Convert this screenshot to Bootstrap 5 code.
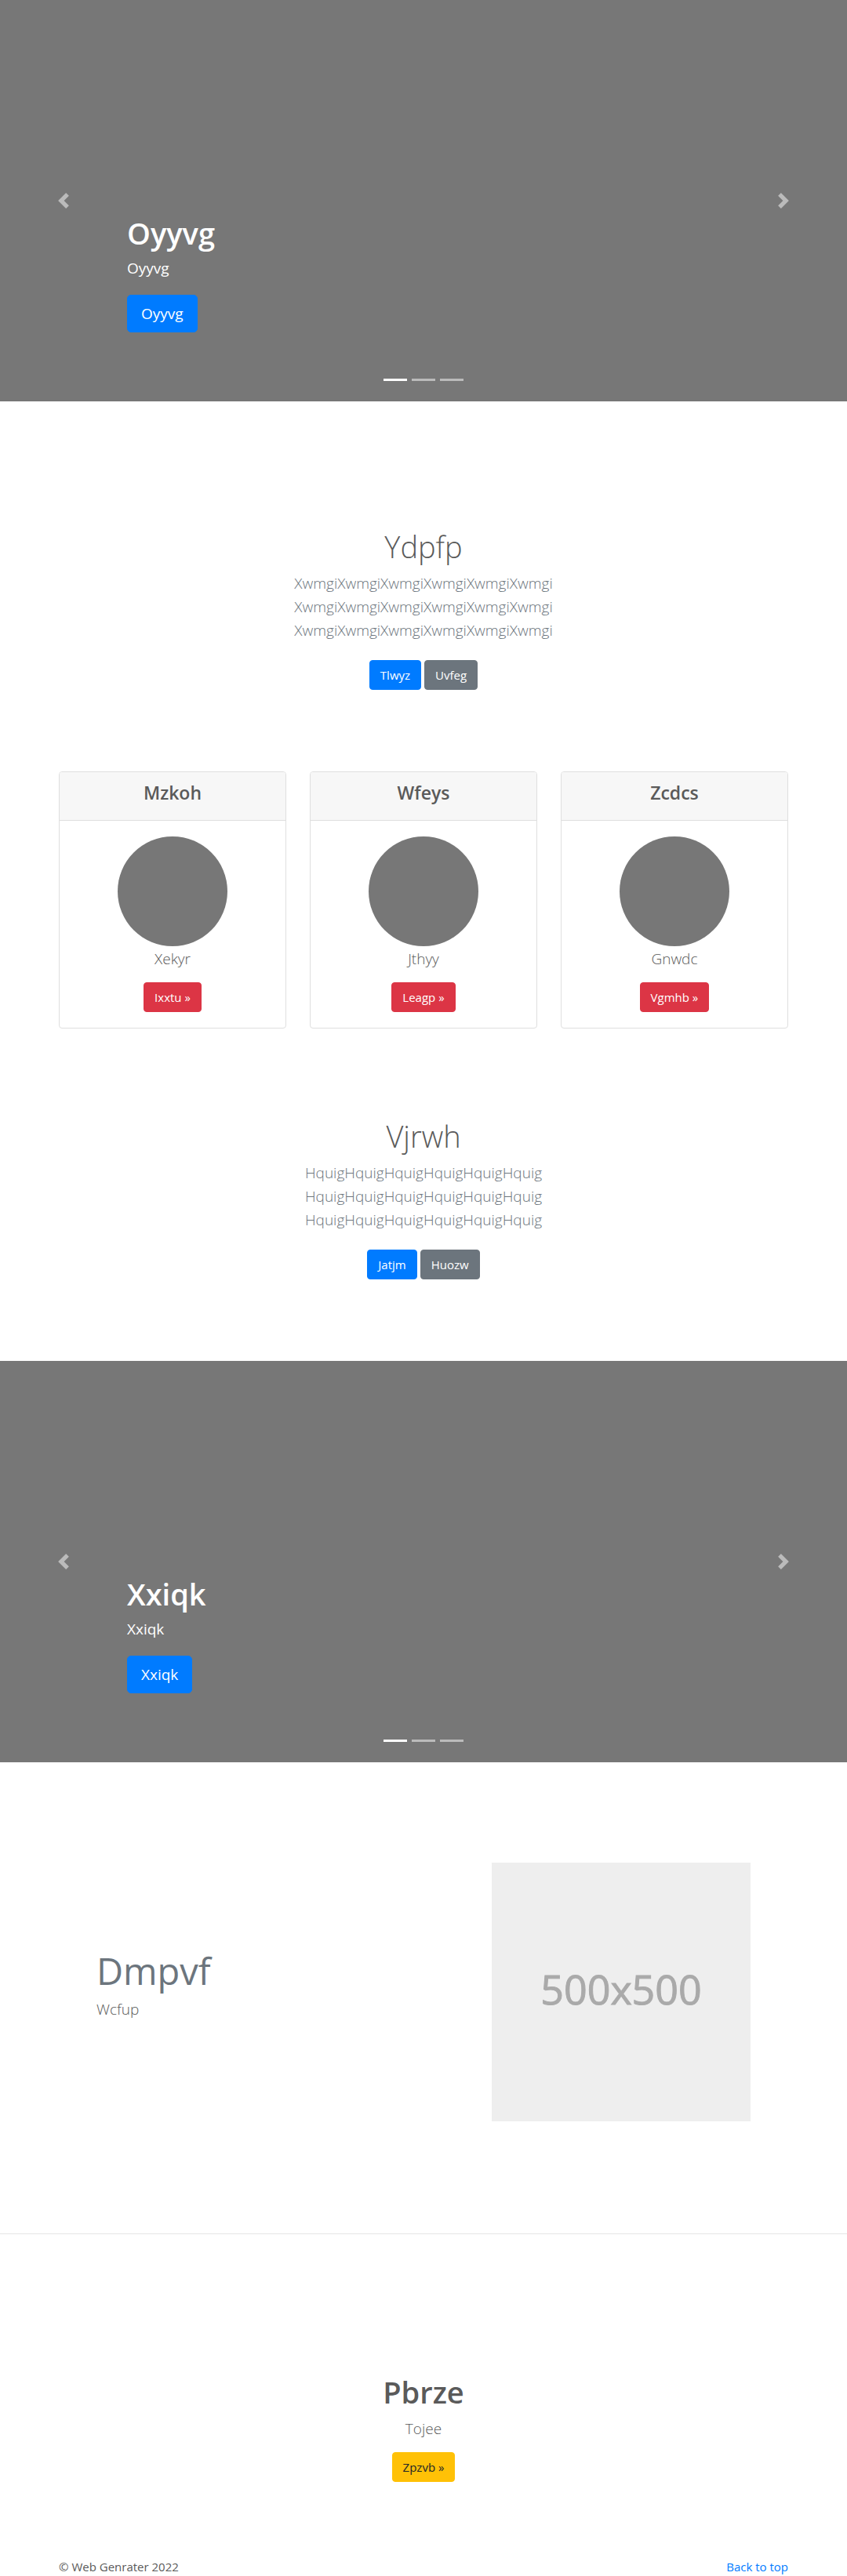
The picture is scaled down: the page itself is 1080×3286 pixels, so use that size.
<!DOCTYPE html>
<html lang="en">
<head>
<meta charset="utf-8">
<meta name="viewport" content="width=device-width, initial-scale=1">
<title>Web Genrater</title>
<link href="https://cdn.jsdelivr.net/npm/bootstrap@5.3.0/dist/css/bootstrap.min.css" rel="stylesheet">
<style>
body { font-family: "Segoe UI", "Open Sans", "Noto Sans", sans-serif; color: #5a5a5a; }
.container, .row { --bs-gutter-x: 30px; }
h1, h2, h4 { font-weight: 600; color: inherit; }
h1 { font-size: 38px; line-height: 48px; padding-top: 1px; margin-bottom: 7px; }
h4 { font-size: 23px; line-height: 29px; }
.lead { font-size: 19px; line-height: 30px; font-weight: 300; padding-top: 1px; margin-bottom: 15px; }
.btn { --bs-btn-font-size: 15px; --bs-btn-padding-x: 13px; --bs-btn-border-radius: 4px; line-height: 24px; }
.btn-lg { --bs-btn-font-size: 19px; --bs-btn-padding-x: 17px; --bs-btn-border-radius: 5px; line-height: 30px; }
.btn-primary { --bs-btn-bg: #007bff; --bs-btn-border-color: #007bff; }
.btn-warning { --bs-btn-color: #212529; --bs-btn-hover-color: #212529; }
.muted-text { color: #6c757d; }
.hero .carousel-item { height: 512px; background: #777; }
.hero .carousel-caption { bottom: 48px; padding-bottom: 20px; }
.hero .carousel-caption p { font-size: 19px; line-height: 28px; margin-bottom: 20px; }
.hero .carousel-control-prev, .hero .carousel-control-next { opacity: .5; }
.chevron { width: 20px; height: 20px; fill: #fff; }
.intro { padding: 96px 0; }
.after-hero { margin-top: 64px; }
.after-cards { margin-top: 16px; }
.card { --bs-card-border-color: #dfdfdf; --bs-card-border-radius: 4px; --bs-card-inner-border-radius: 3px; --bs-card-cap-bg: #f7f7f7; }
.card-header { padding: 12px 20px; }
.card-body { padding: 20px; }
.avatar { width: 140px; height: 140px; background: #777; }
.feature { padding: 128px 48px 143px; }
.feature h2 { font-size: 47px; line-height: 50px; font-weight: 400; }
.feature svg { display: block; width: 100%; }
.rule { border-top: 1px solid #e5e5e5; }
.closing { padding: 176px 0 96px; }
.footer-line { font-size: 15px; line-height: 24px; }
.footer-line a { color: #007bff; text-decoration: none; }
</style>
</head>
<body>
<main>
  <div id="heroOne" class="carousel slide hero">
    <div class="carousel-indicators">
      <button type="button" data-bs-target="#heroOne" data-bs-slide-to="0" class="active" aria-current="true" aria-label="Slide 1"></button>
      <button type="button" data-bs-target="#heroOne" data-bs-slide-to="1" aria-label="Slide 2"></button>
      <button type="button" data-bs-target="#heroOne" data-bs-slide-to="2" aria-label="Slide 3"></button>
    </div>
    <div class="carousel-inner">
      <div class="carousel-item active"><div class="carousel-caption text-start">
        <h1>Oyyvg</h1><p>Oyyvg</p><p><a class="btn btn-lg btn-primary d-inline-block align-top" href="#">Oyyvg</a></p>
      </div></div>
      <div class="carousel-item"></div>
      <div class="carousel-item"></div>
    </div>
    <button class="carousel-control-prev" type="button" data-bs-target="#heroOne" data-bs-slide="prev" aria-label="Previous"><svg class="chevron" viewBox="0 0 8 8"><path d="M5.25 0l-4 4 4 4 1.5-1.5-2.5-2.5 2.5-2.5-1.5-1.5z"/></svg></button>
    <button class="carousel-control-next" type="button" data-bs-target="#heroOne" data-bs-slide="next" aria-label="Next"><svg class="chevron" viewBox="0 0 8 8"><path d="M2.75 0l-1.5 1.5 2.5 2.5-2.5 2.5 1.5 1.5 4-4-4-4z"/></svg></button>
  </div>

  <section class="intro after-hero text-center container">
    <h1 class="fw-light">Ydpfp</h1>
    <p class="lead muted-text">XwmgiXwmgiXwmgiXwmgiXwmgiXwmgi<br>XwmgiXwmgiXwmgiXwmgiXwmgiXwmgi<br>XwmgiXwmgiXwmgiXwmgiXwmgiXwmgi</p>
    <div class="d-flex justify-content-center gap-1 py-2">
      <a href="#" class="btn btn-primary">Tlwyz</a>
      <a href="#" class="btn btn-secondary">Uvfeg</a>
    </div>
  </section>

  <div class="container text-center">
    <div class="row">
      <div class="col-md-4"><div class="card">
        <div class="card-header"><h4>Mzkoh</h4></div>
        <div class="card-body"><div class="avatar rounded-circle mx-auto"></div><p class="lead">Xekyr</p><a class="btn btn-danger d-inline-block align-top" href="#">Ixxtu »</a></div>
      </div></div>
      <div class="col-md-4"><div class="card">
        <div class="card-header"><h4>Wfeys</h4></div>
        <div class="card-body"><div class="avatar rounded-circle mx-auto"></div><p class="lead">Jthyy</p><a class="btn btn-danger d-inline-block align-top" href="#">Leagp »</a></div>
      </div></div>
      <div class="col-md-4"><div class="card">
        <div class="card-header"><h4>Zcdcs</h4></div>
        <div class="card-body"><div class="avatar rounded-circle mx-auto"></div><p class="lead">Gnwdc</p><a class="btn btn-danger d-inline-block align-top" href="#">Vgmhb »</a></div>
      </div></div>
    </div>
  </div>

  <section class="intro after-cards text-center container">
    <h1 class="fw-light">Vjrwh</h1>
    <p class="lead muted-text">HquigHquigHquigHquigHquigHquig<br>HquigHquigHquigHquigHquigHquig<br>HquigHquigHquigHquigHquigHquig</p>
    <div class="d-flex justify-content-center gap-1 py-2">
      <a href="#" class="btn btn-primary">Jatjm</a>
      <a href="#" class="btn btn-secondary">Huozw</a>
    </div>
  </section>

  <div id="heroTwo" class="carousel slide hero">
    <div class="carousel-indicators">
      <button type="button" data-bs-target="#heroTwo" data-bs-slide-to="0" class="active" aria-current="true" aria-label="Slide 1"></button>
      <button type="button" data-bs-target="#heroTwo" data-bs-slide-to="1" aria-label="Slide 2"></button>
      <button type="button" data-bs-target="#heroTwo" data-bs-slide-to="2" aria-label="Slide 3"></button>
    </div>
    <div class="carousel-inner">
      <div class="carousel-item active"><div class="carousel-caption text-start">
        <h1>Xxiqk</h1><p>Xxiqk</p><p><a class="btn btn-lg btn-primary d-inline-block align-top" href="#">Xxiqk</a></p>
      </div></div>
      <div class="carousel-item"></div>
      <div class="carousel-item"></div>
    </div>
    <button class="carousel-control-prev" type="button" data-bs-target="#heroTwo" data-bs-slide="prev" aria-label="Previous"><svg class="chevron" viewBox="0 0 8 8"><path d="M5.25 0l-4 4 4 4 1.5-1.5-2.5-2.5 2.5-2.5-1.5-1.5z"/></svg></button>
    <button class="carousel-control-next" type="button" data-bs-target="#heroTwo" data-bs-slide="next" aria-label="Next"><svg class="chevron" viewBox="0 0 8 8"><path d="M2.75 0l-1.5 1.5 2.5 2.5-2.5 2.5 1.5 1.5 4-4-4-4z"/></svg></button>
  </div>

  <div class="container">
    <div class="feature">
      <div class="row align-items-center">
        <div class="col-md-7"><h2 class="muted-text">Dmpvf</h2><p class="lead">Wcfup</p></div>
        <div class="col-md-5"><svg viewBox="0 0 330 330" role="img" aria-label="Placeholder"><rect width="330" height="330" fill="#eee"/><text x="165" y="181" text-anchor="middle" font-size="52" fill="#aaa" stroke="#aaa">500x500</text></svg></div>
      </div>
    </div>
  </div>
  <div class="rule"></div>

  <section class="closing container text-center">
    <h1>Pbrze</h1>
    <p class="lead">Tojee</p>
    <a class="btn btn-warning d-inline-block align-top" href="#">Zpzvb »</a>
  </section>
</main>
<footer class="container footer-line d-flex justify-content-between">
  <span>© Web Genrater 2022</span><a href="#">Back to top</a>
</footer>
<script src="https://cdn.jsdelivr.net/npm/bootstrap@5.3.0/dist/js/bootstrap.bundle.min.js"></script>
</body>
</html>
